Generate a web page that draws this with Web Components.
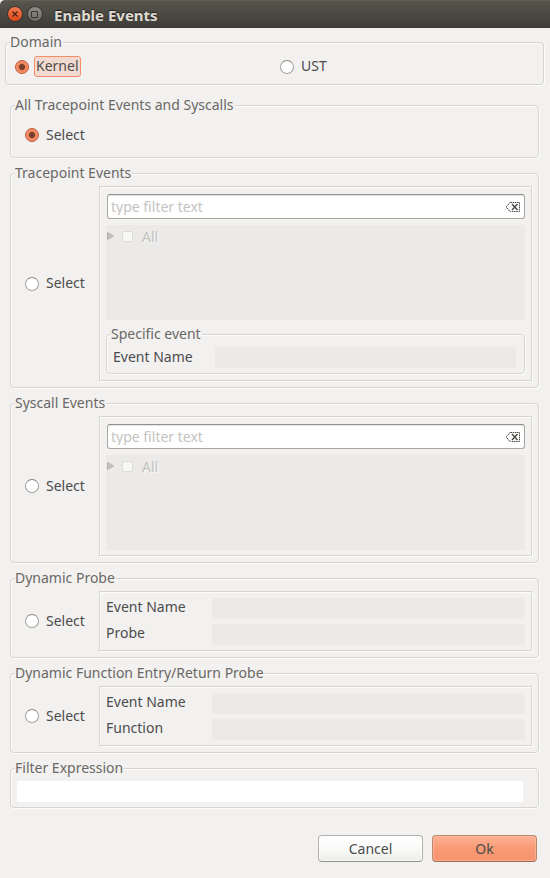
<!DOCTYPE html>
<html lang="en">
<head>
<meta charset="utf-8">
<title>Enable Events</title>
<style>
html { background: #f2f1f0; }
body { margin: 0; font: 14px/17px "Noto Sans", "Open Sans", sans-serif; color: #4c4c4c; --line: #d6d5d3; --bg: #f2f1f0; --off: #ebeae9; }
</style>
</head>
<body>
<enable-events-dialog></enable-events-dialog>
<script>
function define(name, html, setup) {
  const template = document.createElement('template');
  template.innerHTML = '<style>*{box-sizing:border-box}input,button{font:inherit;color:inherit;margin:0}</style>' + html;
  customElements.define(name, class extends HTMLElement {
    constructor() {
      super();
      this.attachShadow({ mode: 'open' }).append(template.content.cloneNode(true));
    }
    connectedCallback() {
      if (setup) setup(this, this.shadowRoot);
    }
  });
}

define('title-bar', `
<style>
:host { display: flex; align-items: center; gap: 4px; height: 28px; padding: 0 7px; box-sizing: border-box;
  background: linear-gradient(#6a685f 0, #57554c 1px, #3e3d39 27px, #3a3935); border-radius: 5px 0 0 0; }
button { padding: 0; border: 0; background: none; width: 16px; height: 16px; }
svg { display: block; }
h1 { margin: 0 0 0 7px; padding: 2px 0 0; font-size: 15px; line-height: 20px; font-weight: bold; color: #dfdbd2; text-shadow: 0 -1px 1px #22211e; }
</style>
<button aria-label="Close"><svg width="16" height="16" viewBox="0 0 16 16">
<defs><linearGradient id="r" x2="0" y2="1"><stop stop-color="#f47c54"/><stop offset="1" stop-color="#dd4814"/></linearGradient></defs>
<circle cx="8" cy="8" r="7.5" fill="url(#r)" stroke="#34332f"/><path d="M5.500 5.500l5 5M10.500 5.500l-5 5" stroke="#44221a" stroke-width="1.2"/></svg></button>
<button aria-label="Maximize"><svg width="16" height="16" viewBox="0 0 16 16">
<defs><linearGradient id="g" x2="0" y2="1"><stop stop-color="#918f86"/><stop offset="1" stop-color="#6c6a63"/></linearGradient></defs>
<circle cx="8" cy="8" r="7.500" fill="url(#g)" stroke="#34332f"/><path d="M4.500 5.500h6v6h-6z" fill="none" stroke="#36352f"/></svg></button>
<h1><slot></slot></h1>`);

define('group-box', `
<style>
:host { display: block; margin-bottom: 1px; }
fieldset { min-width: 0; margin: 0; padding: var(--pad, 4px 6px 6px 0); border: 1px solid var(--line); border-radius: 4px;
  box-shadow: 1px 1px 0 #fcfcfb, inset 1px 1px 0 #fcfcfb; }
legend { margin-left: 4px; padding: 0 1px 0 0; height: 17px; line-height: 15px; background: var(--bg); color: #6a6865; }
:host([flush]) legend { margin-left: calc(4px - var(--inset)); }
</style>
<fieldset><legend></legend><slot></slot></fieldset>`,
(el, root) => { root.querySelector('legend').textContent = el.getAttribute('label'); });

define('radio-option', `
<style>
:host { display: flex; align-items: center; }
label { display: flex; align-items: center; gap: 5px; }
input { appearance: none; width: 14px; height: 14px; border-radius: 50%; border: 1px solid #a3a19d; border-top-color: #8b8985; background: #fff; }
input:checked { border-color: #bd5430; background: radial-gradient(circle, #743f2b 2.6px, #ed7f57 3.4px, #f0845b 4.4px, #f79a75 6px); }
span { padding: 0 1px 2px; border: 1px solid transparent; border-radius: 3px; }
:host([highlight]) span { border-color: #f58e66; background: #f1dacf; }
</style>
<label><input type="radio"><span><slot></slot></span></label>`,
(el, root) => { root.querySelector('input').checked = el.hasAttribute('checked'); });

define('option-row', `
<style>
:host { display: grid; grid-template-columns: 88px minmax(0, 1fr); }
.radio { display: flex; align-items: center; padding-left: 14px; }
.panel { display: flex; flex-direction: column; gap: var(--gap, 6px); padding: 6px 6px 5px; border: 1px solid var(--line);
  box-shadow: 1px 1px 0 #fcfcfb, inset 1px 1px 0 #fcfcfb; }
</style>
<div class="radio"><radio-option>Select</radio-option></div>
<div class="panel"><slot></slot></div>`);

define('filter-field', `
<style>
:host { display: block; padding: 1px 0 0 1px; }
div { display: flex; align-items: center; height: 25px; padding: 0 3px; border: 1px solid #a9a7a3; border-top-color: #93918d; border-radius: 3px; background: #fff; box-shadow: inset 0 1px 1px #e4e3e1; }
input { flex: 1; min-width: 0; padding: 0; border: 0; background: none; outline: 0; }
input::placeholder { color: #c5c3c0; opacity: 1; }
button { padding: 0; border: 0; background: none; }
svg { display: block; }
</style>
<div><input type="text" placeholder="type filter text" aria-label="Filter">
<button aria-label="Clear"><svg width="16" height="12" viewBox="0 0 16 12" fill="none" stroke="#4a4946">
<path d="M5.5 1.5h9v9h-9" stroke-dasharray="1.5 .7"/><path d="M5.5 1L1.5 5.5v1L5.5 11" stroke-dasharray="2 .5"/><path d="M7 3l5.5 6M12.500 3L7 9" stroke-width="1.4"/></svg></button></div>`);

define('event-tree', `
<style>
:host { display: block; height: 95px; background: var(--off); }
.item { display: flex; align-items: center; height: 23px; color: #c3c1be; text-shadow: 1px 1px 0 #fafafa; }
button { padding: 0 0 2px 1px; width: 16px; border: 0; background: none; }
svg { display: block; }
label { display: flex; align-items: center; gap: 9px; }
input { appearance: none; width: 11px; height: 11px; border: 1px solid #dddcda; border-radius: 2px; background: #f7f7f6; }
</style>
<div class="item"><button disabled aria-label="Expand"><svg width="7" height="8" viewBox="0 0 7 8"><path d="M.5.5L6.500 4L.5 7.500z" fill="#c4c2c0" stroke="#b5b3b1"/></svg></button>
<label><input type="checkbox" disabled>All</label></div>`);

define('text-row', `
<style>
:host { display: block; }
label { display: grid; grid-template-columns: var(--label, 106px) minmax(0, 1fr); }
span { line-height: var(--label-line, 17px); }
input { width: 100%; height: 21px; padding: 0 2px; border: 0; background: var(--off); }
:host([open]) label { display: block; }
:host([open]) input { display: block; background: #fff; }
:host([open]) span { display: none; }
</style>
<label><span></span><input type="text"></label>`,
(el, root) => {
  const input = root.querySelector('input');
  if (el.hasAttribute('open')) input.setAttribute('aria-label', el.getAttribute('label'));
  else { root.querySelector('span').textContent = el.getAttribute('label'); input.disabled = true; }
});

define('push-button', `
<style>
:host { display: block; }
button { display: block; width: 105px; height: 27px; padding: 0; border: 1px solid #b3b1ad; border-bottom-color: #94928e; border-radius: 4px;
  background: linear-gradient(#fff, #f9f9f8 55%, #ececea); box-shadow: inset 0 0 0 1px #ffffff99; }
:host([primary]) button { border-color: #b98770; border-bottom-color: #9c6c57; background: linear-gradient(#fdb294, #f89a75 50%, #f6936d); box-shadow: inset 0 0 0 1px #ffc6ae88; }
</style>
<button><slot></slot></button>`);

define('enable-events-dialog', `
<style>
:host { display: block; min-height: 100vh; background: var(--bg); }
main { padding: 6px 6px 16px 5px; }
.domain { display: grid; grid-template-columns: 1fr 1fr; gap: 2px; height: 33px; padding-bottom: 2px; align-items: center; }
.groups { display: flex; flex-direction: column; gap: 6px; padding: 11px 5px 0; }
.all { display: flex; height: 43px; padding: 0 14px 1px; align-items: center; }
.two { --gap: 5px; }
footer { display: flex; justify-content: flex-end; gap: 9px; padding: 26px 7px 0 0; }
</style>
<title-bar>Enable Events</title-bar>
<main>
<group-box label="Domain" flush style="--pad: 0 0 0 9px; --inset: 9px"><div class="domain"><radio-option checked highlight>Kernel</radio-option><radio-option>UST</radio-option></div></group-box>
<div class="groups">
<group-box label="All Tracepoint Events and Syscalls" style="--pad: 0"><div class="all"><radio-option checked>Select</radio-option></div></group-box>
<group-box label="Tracepoint Events"><option-row><filter-field></filter-field><event-tree></event-tree>
<group-box label="Specific event" flush style="--pad: 4px 8px 5px 6px; --inset: 6px; --label: 102px; --label-line: 20px"><text-row label="Event Name"></text-row></group-box></option-row></group-box>
<group-box label="Syscall Events"><option-row><filter-field></filter-field><event-tree></event-tree></option-row></group-box>
<group-box label="Dynamic Probe"><option-row class="two"><text-row label="Event Name"></text-row><text-row label="Probe"></text-row></option-row></group-box>
<group-box label="Dynamic Function Entry/Return Probe"><option-row class="two"><text-row label="Event Name"></text-row><text-row label="Function"></text-row></option-row></group-box>
<group-box label="Filter Expression" flush style="--pad: 4px 15px 5px 6px; --inset: 6px"><text-row open label="Filter Expression"></text-row></group-box>
</div>
<footer><push-button>Cancel</push-button><push-button primary>Ok</push-button></footer>
</main>`);
</script>
</body>
</html>
